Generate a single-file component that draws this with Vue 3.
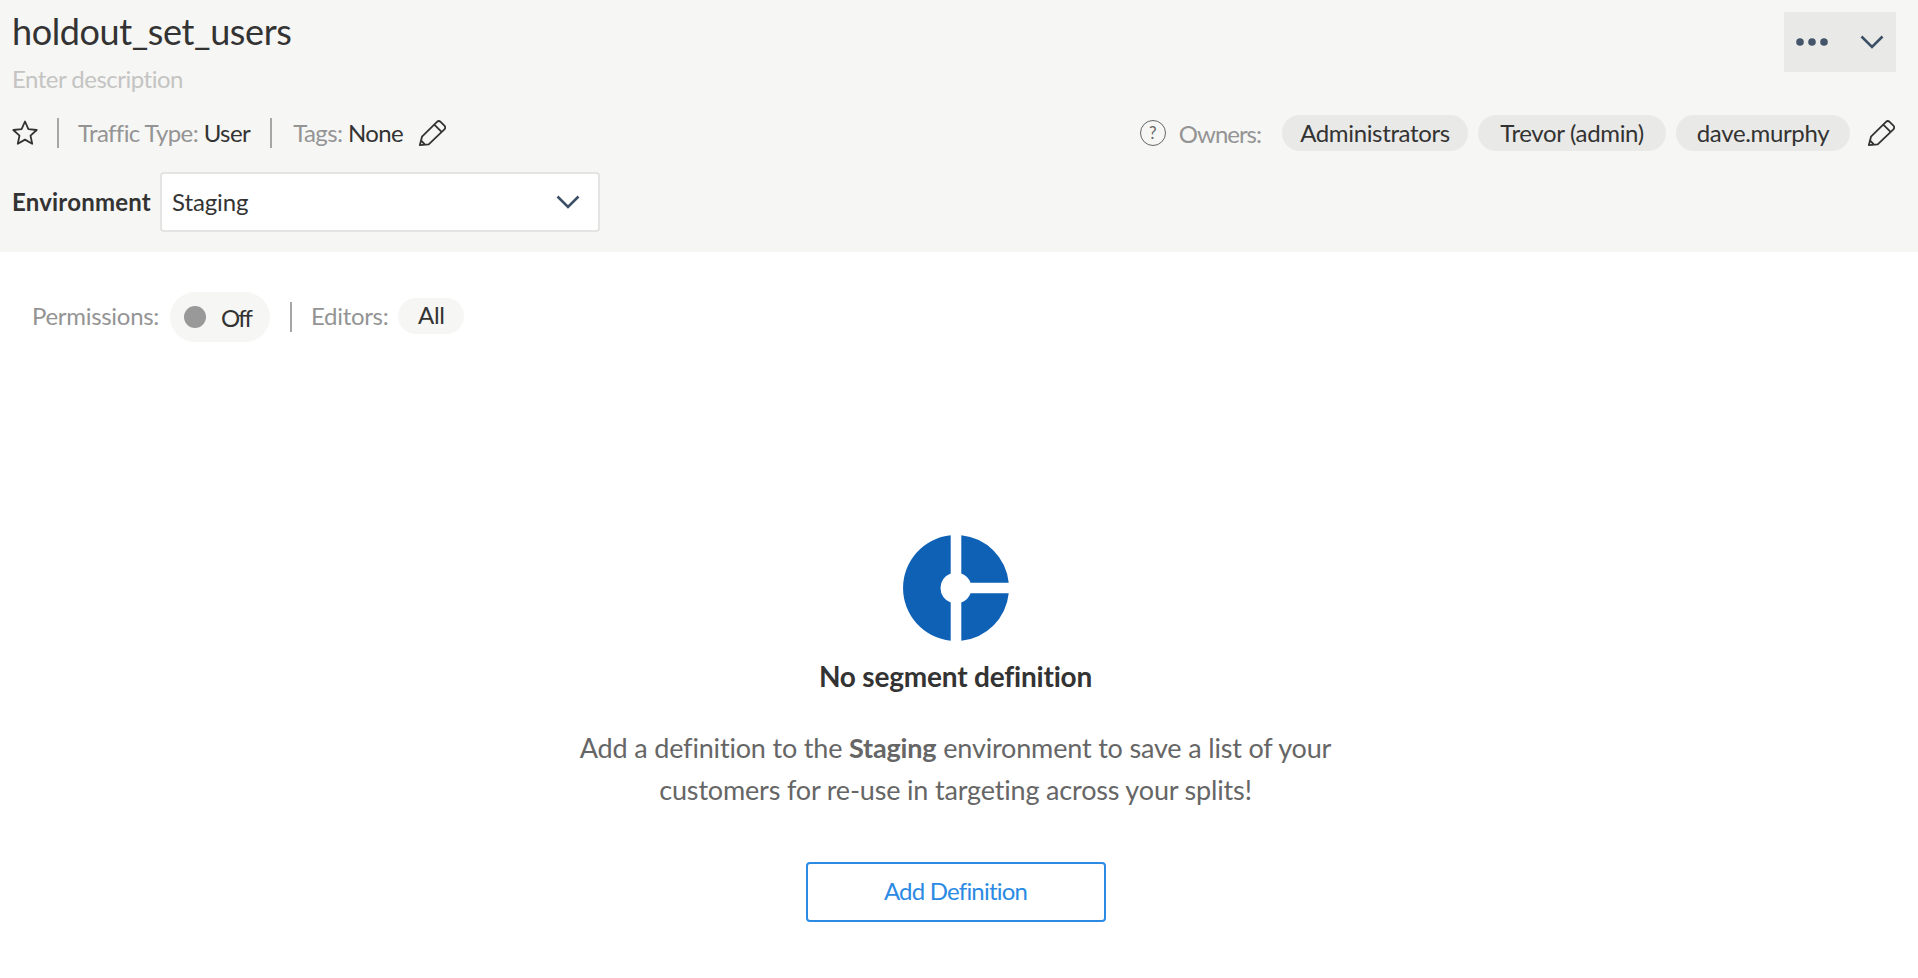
<template>
  <div class="page">
    <header class="head">
      <div class="top-row">
        <div class="title-block">
          <h1 class="title">holdout_set_users</h1>
          <p class="description">Enter description</p>
        </div>
        <div class="more-btn">
          <svg width="32" height="8" viewBox="0 0 32 8"><circle cx="4" cy="4" r="3.8" /><circle cx="16" cy="4" r="3.8" /><circle cx="28" cy="4" r="3.8" /></svg>
          <svg width="24" height="14" viewBox="0 0 24 14" fill="none"><path d="M1.5 1.5 12 12 22.5 1.5" /></svg>
        </div>
      </div>

      <div class="meta-row">
        <div class="meta-left">
          <svg class="star" width="26" height="26" viewBox="0 0 26 26" fill="none"><path d="M13 1.500l3.400 7.600 8.300.9-6.200 5.600 1.700 8.200-7.200-4.200-7.200 4.200 1.700-8.200-6.200-5.600 8.300-.9z" /></svg>
          <span class="divider"></span>
          <span class="meta-item"><span class="muted">Traffic Type:</span> User</span>
          <span class="divider divider-tags"></span>
          <span class="meta-item"><span class="muted">Tags:</span> None</span>
          <svg class="pencil" width="28" height="28" viewBox="0 0 28 28" fill="none"><path d="M1.800 26.200 4 17.700 19 2.900a2.600 2.600 0 0 1 3.600 0l3.800 3.800a2.600 2.600 0 0 1 0 3.600L10.700 25.300zM16.300 5.600l7.300 7.300M3 21.500l3.600 3.600" /></svg>
        </div>
        <div class="meta-right">
          <span class="help">?</span>
          <span class="muted owners-label">Owners:</span>
          <div class="chips">
            <span v-for="owner in owners" :key="owner" class="chip">{{ owner }}</span>
          </div>
          <svg class="pencil" width="28" height="28" viewBox="0 0 28 28" fill="none"><path d="M1.800 26.200 4 17.700 19 2.900a2.600 2.600 0 0 1 3.600 0l3.800 3.800a2.600 2.600 0 0 1 0 3.600L10.700 25.300zM16.300 5.600l7.300 7.300M3 21.500l3.600 3.600" /></svg>
        </div>
      </div>

      <div class="env-row">
        <label class="env-label">Environment</label>
        <div class="select">
          <span class="select-value">Staging</span>
          <svg width="24" height="14" viewBox="0 0 24 14" fill="none"><path d="M1.5 1.500 12 12 22.500 1.500" /></svg>
        </div>
      </div>
    </header>

    <div class="perm-row">
      <span class="muted perm-label">Permissions:</span>
      <span class="toggle"><i class="toggle-dot"></i><span class="toggle-text">Off</span></span>
      <span class="divider"></span>
      <span class="muted perm-label">Editors:</span>
      <span class="all-pill">All</span>
    </div>

    <main class="empty">
      <svg class="logo" width="108" height="108" viewBox="0 0 108 108">
        <path fill="#0e61b4" d="M48.700 1.270V39.430A15.500 15.500 0 0 0 48.700 68.570V106.730A53 53 0 0 1 48.700 1.270zM59.300 1.270A53 53 0 0 1 106.730 48.700H68.570A15.500 15.500 0 0 0 59.300 39.430zM106.730 59.300A53 53 0 0 1 59.300 106.730V68.570A15.500 15.500 0 0 0 68.570 59.300z" />
      </svg>
      <h2 class="empty-title">No segment definition</h2>
      <p class="empty-text">Add a definition to the <strong>Staging</strong> environment to save a list of your<br />customers for re-use in targeting across your splits!</p>
      <button class="add-btn">Add Definition</button>
    </main>
  </div>
</template>

<script setup>
const owners = ['Administrators', 'Trevor (admin)', 'dave.murphy']
</script>

<style>
html, body {
  margin: 0;
  background: #fff;
}
</style>

<style scoped>
.page {
  height: 978px;
  overflow: hidden;
  font-family: 'Lato', 'Liberation Sans', sans-serif;
  font-size: 24px;
  letter-spacing: -0.6px;
  color: #333;
}

.head {
  height: 252px;
  box-sizing: border-box;
  background: #f6f6f4;
  padding: 12px 22px 0 12px;
}

.top-row {
  display: flex;
  justify-content: space-between;
  height: 94px;
}

.title {
  margin: -2px 0 0;
  font-size: 36px;
  font-weight: 400;
  line-height: 42px;
  letter-spacing: -0.4px;
}

.description {
  margin: 10px 0 0;
  font-size: 24px;
  line-height: 34px;
  letter-spacing: -0.5px;
  color: #c4c4c2;
}

.more-btn {
  width: 112px;
  height: 60px;
  background: #e9e9e7;
  display: flex;
  align-items: center;
  justify-content: space-between;
  box-sizing: border-box;
  padding: 0 12px 0 12px;
}

.more-btn circle {
  fill: #44546a;
}

.more-btn path,
.select path {
  stroke: #3d4f66;
  stroke-width: 2.6;
}

.meta-row {
  display: flex;
  justify-content: space-between;
  align-items: center;
  height: 36px;
  margin-top: 9px;
}

.meta-left,
.meta-right {
  display: flex;
  align-items: center;
}

.star path,
.pencil path {
  stroke: #333;
  stroke-width: 1.800;
  stroke-linejoin: round;
}

.divider {
  width: 2px;
  height: 30px;
  background: #a6a6a6;
  flex: none;
}

.meta-left .divider {
  margin: 0 19px 0 19px;
}

.meta-left .divider-tags {
  margin: 0 21px 0 20px;
}

.meta-item {
  margin-bottom: 2px;
}

.muted {
  color: #949494;
}

.pencil {
  margin-left: 15px;
}

.help {
  width: 26px;
  height: 26px;
  box-sizing: border-box;
  border: 1.500px solid #666;
  border-radius: 50%;
  font-size: 17px;
  line-height: 23px;
  text-align: center;
  color: #666;
  letter-spacing: 0;
}

.owners-label {
  margin: 0 21px 0 13px;
  letter-spacing: -1px;
}

.chips {
  display: grid;
  grid-template-columns: 186px 188px 174px;
  gap: 10px;
}

.chip {
  height: 36px;
  line-height: 36px;
  text-align: center;
  border-radius: 18px;
  background: #e9e9e7;
  letter-spacing: -0.35px;
}

.chips + .pencil {
  margin: 0 1px 0 17px;
}

.env-row {
  display: flex;
  align-items: center;
  margin-top: 21px;
}

.env-label {
  font-weight: 700;
  width: 148px;
  letter-spacing: 0.2px;
  margin-bottom: 2px;
}

.select {
  width: 440px;
  height: 60px;
  box-sizing: border-box;
  border: 2px solid #e4e4e2;
  border-radius: 4px;
  background: #fff;
  display: flex;
  align-items: center;
  justify-content: space-between;
  padding: 0 18px 0 10px;
  letter-spacing: -0.1px;
}

.select-value {
  margin-bottom: 2px;
}

.perm-row {
  display: flex;
  align-items: center;
  height: 50px;
  margin-top: 40px;
  padding-left: 32px;
  letter-spacing: -0.3px;
}

.perm-label {
  margin-bottom: 4px;
}

.toggle {
  display: flex;
  align-items: center;
  width: 100px;
  height: 50px;
  box-sizing: border-box;
  margin-left: 11px;
  padding-left: 14px;
  border-radius: 25px;
  background: #f6f6f4;
}

.toggle-dot {
  width: 22px;
  height: 22px;
  margin-right: 15px;
  border-radius: 50%;
  background: #999;
}

.toggle-text {
  letter-spacing: -2px;
}

.perm-row .divider {
  margin: 0 19px 0 20px;
}

.all-pill {
  width: 66px;
  height: 36px;
  line-height: 34px;
  margin: 0 0 2px 10px;
  text-align: center;
  border-radius: 18px;
  background: #f6f6f4;
}

.empty {
  display: flex;
  flex-direction: column;
  align-items: center;
  margin-top: 192px;
  padding-right: 7px;
}

.empty-title {
  margin: 16px 0 1px;
  font-size: 28px;
  line-height: 36px;
  font-weight: 700;
  letter-spacing: -0.2px;
}

.empty-text {
  margin: 32px 0 0;
  font-size: 27px;
  line-height: 42px;
  text-align: center;
  color: #666;
  letter-spacing: -0.17px;
}

.add-btn {
  width: 300px;
  height: 60px;
  margin-top: 51px;
  padding: 0 0 4px;
  border: 2px solid #2b8ae3;
  border-radius: 4px;
  background: #fff;
  color: #2b8ae3;
  font-family: inherit;
  font-size: 24px;
  letter-spacing: -0.8px;
}
</style>
